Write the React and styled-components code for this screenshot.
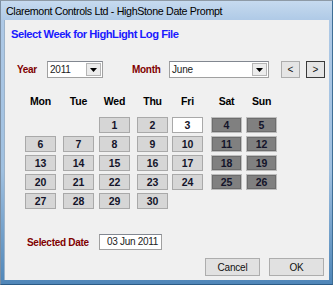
import React from "react";
import styled, { createGlobalStyle } from "styled-components";

const GlobalStyle = createGlobalStyle`
  html, body { margin: 0; padding: 0; background: #f0f0f0; }
  * { box-sizing: border-box; }
`;

const Window = styled.div`
  width: 333px;
  height: 285px;
  display: flex;
  flex-direction: column;
  border-top: 1px solid #8e9aa6;
  border-left: 1px solid #7d8fa3;
  border-right: 1px solid #3f6f96;
  border-bottom: 1px solid #2b5b86;
  background: linear-gradient(#c6daef, #aec9e6 20px, #9fc0e0 60%, #4f86b8);
  font-family: "Liberation Sans", Arial, sans-serif;
`;

const TitleBar = styled.div`
  height: 19px;
  padding-left: 5px;
  display: flex;
  align-items: center;
  font-size: 10.7px;
  color: #000;
  letter-spacing: -0.35px;
  white-space: nowrap;
`;

const Client = styled.div`
  flex: 1;
  margin: 0 3px 4px 3px;
  background: #f0f0f0;
  border-left: 1px solid #9db3c9;
  display: flex;
  flex-direction: column;
`;

const Heading = styled.div`
  margin: 7px 0 0 6px;
  height: 14px;
  line-height: 14px;
  font-size: 11.2px;
  font-weight: bold;
  letter-spacing: -0.5px;
  color: #1a1aff;
  white-space: nowrap;
`;

const TopRow = styled.div`
  display: flex;
  align-items: center;
  margin: 20px 0 0 12px;
  height: 17px;
`;

const Label = styled.span`
  font-size: 10px;
  font-weight: bold;
  letter-spacing: -0.3px;
  color: #800000;
  white-space: nowrap;
  width: ${(p) => (p.$w ? `${p.$w}px` : "auto")};
  margin-left: ${(p) => p.$ml || 0}px;
`;

const Combo = styled.div`
  width: ${(p) => p.$w}px;
  height: 17px;
  margin-left: ${(p) => p.$ml || 0}px;
  background: #fff;
  border: 1px solid #a0a0a0;
  border-top-color: #828790;
  display: flex;
  align-items: center;
  font-size: 10px;
  letter-spacing: -0.2px;
  color: #222;
  padding-left: 2px;
`;

const ComboText = styled.span`
  flex: 1;
`;

const ComboArrow = styled.div`
  width: 15px;
  height: 13px;
  margin-right: 1px;
  background: #ececec;
  border: 1px solid #b5b5b5;
  display: flex;
  align-items: center;
  justify-content: center;
`;

const NavButton = styled.div`
  width: 19px;
  height: 17px;
  margin-left: ${(p) => p.$ml || 0}px;
  background: #e5e5e5;
  border: 1px solid ${(p) => (p.$focus ? "#3a3a3a" : "#adadad")};
  display: flex;
  align-items: center;
  justify-content: center;
  font-size: 10px;
  color: #111;
`;

const cols = "38px 36px 38px 35px 39px 35px 31px";

const HeaderGrid = styled.div`
  display: grid;
  grid-template-columns: ${cols};
  margin: 15px 0 0 20px;
  height: 16px;
`;

const DayName = styled.div`
  width: 31px;
  text-align: center;
  font-size: 10.5px;
  font-weight: bold;
  letter-spacing: -0.2px;
  line-height: 16px;
  color: #000;
`;

const DayGrid = styled.div`
  display: grid;
  grid-template-columns: ${cols};
  grid-auto-rows: 16px;
  row-gap: 3px;
  margin: 8px 0 0 20px;
`;

const fills = { week: "#d6d6d6", sel: "#ffffff", end: "#808080" };

const DayButton = styled.div`
  width: 31px;
  height: 16px;
  grid-column: ${(p) => p.$col};
  background: ${(p) => fills[p.$kind]};
  border: 1px solid ${(p) => (p.$kind === "end" ? "#bdbdbd" : "#a9a9a9")};
  box-shadow: ${(p) => (p.$kind === "end" ? "inset 0 0 0 1px #6d6d6d" : "none")};
  display: flex;
  align-items: center;
  justify-content: center;
  font-size: 10.5px;
  font-weight: bold;
  color: #14142a;
`;

const DateRow = styled.div`
  display: flex;
  align-items: center;
  margin: 25px 0 0 22px;
  height: 16px;
`;

const DateBox = styled.div`
  width: 63px;
  height: 16px;
  margin-left: 12px;
  background: #fff;
  border: 1px solid #a0a0a0;
  border-top-color: #828790;
  font-size: 10px;
  letter-spacing: -0.3px;
  color: #222;
  line-height: 14px;
  padding-left: 7px;
  white-space: nowrap;
`;

const ButtonRow = styled.div`
  display: flex;
  justify-content: flex-end;
  gap: 9px;
  margin: 8px 5px 0 0;
`;

const DialogButton = styled.div`
  width: 55px;
  height: 18px;
  background: #e1e1e1;
  border: 1px solid #adadad;
  display: flex;
  align-items: center;
  justify-content: center;
  font-size: 10px;
  letter-spacing: -0.2px;
  color: #111;
`;

const days = [];
// June 2011 starts on a Wednesday
for (let d = 1; d <= 30; d++) {
  const col = ((d + 1) % 7) + 1;
  days.push({ d, col });
}

function kindOf(d, col) {
  if (d === 3) return "sel";
  if (col >= 6) return "end";
  return "week";
}

const Arrow = () => (
  <ComboArrow>
    <svg width="7" height="4" viewBox="0 0 7 4">
      <path d="M0 0h7L3.5 4z" fill="#000" />
    </svg>
  </ComboArrow>
);

export default function App() {
  return (
    <>
      <GlobalStyle />
      <Window>
        <TitleBar>Claremont Controls Ltd - HighStone Date Prompt</TitleBar>
        <Client>
          <Heading>Select Week for HighLight Log File</Heading>
          <TopRow>
            <Label $w={21}>Year</Label>
            <Combo $w={56} $ml={9}>
              <ComboText>2011</ComboText>
              <Arrow />
            </Combo>
            <Label $w={28} $ml={29}>Month</Label>
            <Combo $w={100} $ml={9}>
              <ComboText>June</ComboText>
              <Arrow />
            </Combo>
            <NavButton $ml={12}>&lt;</NavButton>
            <NavButton $ml={6} $focus>&gt;</NavButton>
          </TopRow>
          <HeaderGrid>
            {["Mon", "Tue", "Wed", "Thu", "Fri", "Sat", "Sun"].map((n) => (
              <DayName key={n}>{n}</DayName>
            ))}
          </HeaderGrid>
          <DayGrid>
            {days.map(({ d, col }) => (
              <DayButton key={d} $col={col} $kind={kindOf(d, col)}>
                {d}
              </DayButton>
            ))}
          </DayGrid>
          <DateRow>
            <Label $w={60}>Selected Date</Label>
            <DateBox>03 Jun 2011</DateBox>
          </DateRow>
          <ButtonRow>
            <DialogButton>Cancel</DialogButton>
            <DialogButton>OK</DialogButton>
          </ButtonRow>
        </Client>
      </Window>
    </>
  );
}
